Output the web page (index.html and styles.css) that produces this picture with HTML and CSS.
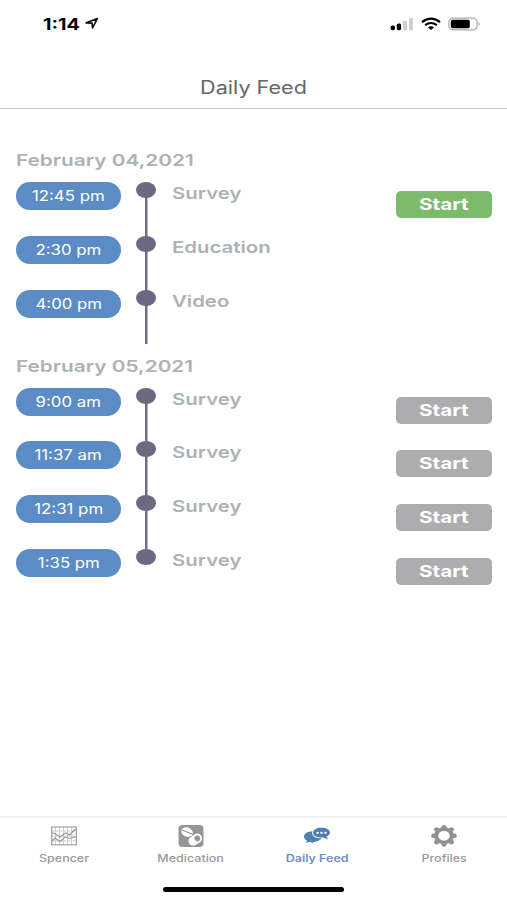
FILE: index.html
```html
<!DOCTYPE html>
<html lang="en">
<head>
<meta charset="utf-8">
<title>Daily Feed</title>
<link rel="stylesheet" href="styles.css">
</head>
<body>
<div class="app">
  <div class="status">
    <span class="clock"><span class="wide">1:14</span></span>
    <svg class="location" width="14" height="13" viewBox="0 0 14 13"><path d="M1.2 5.8 12.3 1.600 7.6 10.800 7 6.1Z" fill="none" stroke="#111" stroke-width="1.7" stroke-linejoin="round"/></svg>
    <svg class="signals" width="92" height="14" viewBox="0 0 92 14">
      <rect x="0.7" y="8.4" width="4.3" height="4.8" rx="1.6"/><rect x="6.8" y="6.4" width="4.3" height="6.8" rx="1.6"/>
      <g fill="#d0d0d0"><rect x="13" y="3.8" width="4.1" height="9.4" rx="1"/><rect x="19" y="1" width="4.1" height="12.2" rx="1"/></g>
      <g fill="none" stroke="#000" stroke-width="2.1"><path d="M32 5.1q9-7 18 0"/><path d="M35.2 8.2q5.8-4.4 11.6 0"/></g>
      <path d="M38 10.4q3-2.1 6 0L41 13Z"/>
      <rect x="58.9" y="1.2" width="28.2" height="11.6" rx="4" fill="#fff" stroke="#aaa" stroke-width="1.2"/><rect x="60.8" y="2.8" width="19" height="8.4" rx="1.8"/><path d="M88.5 4.8q2.5 2.2 0 4.4Z" fill="#aaa"/>
    </svg>
  </div>
  <header class="title"><span class="wide">Daily Feed</span></header>
  <main class="feed">
    <section class="day">
      <h2><span class="wide">February 04,2021</span></h2>
      <div class="event"><div class="time"><span class="wide">12:45 pm</span></div><div class="track"><i></i></div><div class="kind"><span class="wide">Survey</span></div><button class="start active"><span class="wide">Start</span></button></div>
      <div class="event"><div class="time"><span class="wide">2:30 pm</span></div><div class="track"><i></i></div><div class="kind"><span class="wide">Education</span></div></div>
      <div class="event"><div class="time"><span class="wide">4:00 pm</span></div><div class="track"><i></i></div><div class="kind"><span class="wide">Video</span></div></div>
    </section>
    <section class="day last">
      <h2><span class="wide">February 05,2021</span></h2>
      <div class="event"><div class="time"><span class="wide">9:00 am</span></div><div class="track"><i></i></div><div class="kind"><span class="wide">Survey</span></div><button class="start"><span class="wide">Start</span></button></div>
      <div class="event"><div class="time"><span class="wide">11:37 am</span></div><div class="track"><i></i></div><div class="kind"><span class="wide">Survey</span></div><button class="start"><span class="wide">Start</span></button></div>
      <div class="event"><div class="time"><span class="wide">12:31 pm</span></div><div class="track"><i></i></div><div class="kind"><span class="wide">Survey</span></div><button class="start"><span class="wide">Start</span></button></div>
      <div class="event"><div class="time"><span class="wide">1:35 pm</span></div><div class="track"><i></i></div><div class="kind"><span class="wide">Survey</span></div><button class="start"><span class="wide">Start</span></button></div>
    </section>
  </main>
  <nav class="tabs">
    <a class="tab"><svg width="28" height="24" viewBox="0 0 28 24"><g fill="none" stroke="#c4c4c4" stroke-width="0.8"><path d="M5.5 3v18M9.5 3v18M13.5 3v18M17.5 3v18M21.5 3v18M2 7h24M2 12h24M2 17h24"/></g><g fill="none" stroke="#999" stroke-width="1.1"><rect x="1.7" y="3" width="24.6" height="17.8"/><path d="M2 9l3 .5 5 3.5 5.500-4 4 2 6-6M2 17l3-3 5 3.500 5-4.500 5 1.500 6-2"/></g></svg><span class="wide">Spencer</span></a>
    <a class="tab"><svg width="28" height="24" viewBox="0 0 28 24"><rect x="1.500" y="1" width="25" height="22" rx="4" fill="#969696"/><g transform="rotate(22 10 8)"><ellipse cx="10" cy="8" rx="6" ry="4.600" fill="#fff"/><path d="M4 8h12" stroke="#969696" stroke-width="1.200"/></g><g transform="rotate(-32 18.500 15.500)"><rect x="11" y="10.800" width="14.500" height="9.400" rx="4.700" fill="#fff"/><path d="M18 15.500c0-2 .5-3 2.500-3a3 3 0 0 1 0 6c-2 0-2.500-1-2.500-3Z" fill="#969696"/></g></svg><span class="wide">Medication</span></a>
    <a class="tab current"><svg width="28" height="24" viewBox="0 0 28 24"><path d="M9.300 7.200C4.500 7.400 1 9.500 1 12.500c0 1.900 1.200 3.200 3 4.200L3 19l4-1.200 1.200.2L9 19.500l1.500-1.600c4.500-.3 7.500-2 8-3.600C12 14.500 8 11.500 9.300 7.200Z" fill="#4f7db4"/><path d="M18.500 3.800c-5 0-8.500 2-8.500 5s3.500 4.800 8.500 4.800h1.800l4.700 1.900-1.500-3c2-.9 3.500-2.100 3.500-3.700 0-3-3.500-5-8.500-5Z" fill="#4f7db4"/><g fill="#fff"><ellipse cx="14.600" cy="8.800" rx="1.300" ry="1.100"/><ellipse cx="18.500" cy="8.800" rx="1.300" ry="1.100"/><ellipse cx="22.400" cy="8.800" rx="1.300" ry="1.100"/></g></svg><span class="wide">Daily Feed</span></a>
    <a class="tab"><svg width="28" height="24" viewBox="0 0 28 24"><g transform="translate(14 11.800) scale(1.180 1)"><circle r="6.700" fill="none" stroke="#919191" stroke-width="3.600"/><g stroke="#919191" stroke-width="4.400" stroke-linecap="round"><path d="M0-8.200v-.5M0 8.200v.5M-8.200 0h-.5M8.200 0h.5M-6-6l-.3-.3M6 6l.3.3M6-6l.3-.3M-6 6l-.3.3"/></g></g></svg><span class="wide">Profiles</span></a>
  </nav>
  <div class="home"></div>
</div>
</body>
</html>
```
FILE: styles.css
```css
* { box-sizing: border-box; }
body { margin: 0; background: #fff; font-family: Inter, "Liberation Sans", sans-serif; }
.app { width: 507px; height: 900px; display: flex; flex-direction: column; overflow: hidden; }
/* Expanded lettering across the interface */
.wide { display: inline-block; white-space: nowrap; transform: scaleX(var(--stretch, 1.2)); }
.status { height: 48px; display: flex; align-items: center; padding: 0 25px 0 43px; }
.clock { width: 42px; font-size: 16px; font-weight: 700; line-height: 20px; --stretch: 1.23; }
.clock .wide, h2 .wide, .kind .wide { transform-origin: left center; }
.location { margin-top: -1px; }
.signals { margin-left: auto; }
.title { height: 61px; border-bottom: 1.500px solid #c9c9c9; padding-top: 28px; text-align: center; color: #666; font-size: 18px; line-height: 24px; --stretch: 1.2; }
.feed { flex: 1; padding: 41px 15px 0 16px; }
.day { height: 205.500px; }
h2 { margin: 0 0 12px; height: 20px; font-size: 16.500px; line-height: 20px; font-weight: 600; color: #adb2b5; --stretch: 1.26; }
.event { height: 53.850px; display: grid; grid-template-columns: 105px 50px 225px 96px; align-items: start; }
.time { height: 28px; border-radius: 14px; background: #5b8cc6; color: #fff; text-align: center; font-size: 14px; line-height: 28px; --stretch: 1.2; }
.track { height: 100%; display: flex; justify-content: center; background: linear-gradient(#706e89, #706e89) 24px 0 / 2.500px 100% no-repeat; }
.track i { width: 20px; height: 16px; border-radius: 50%; background: #6c6a83; }
.last .event:last-child .track { background: none; }
.kind { padding-left: 1px; font-size: 16.500px; line-height: 22px; font-weight: 600; color: #adb2b5; --stretch: 1.235; }
.start { margin-top: 9px; width: 96px; height: 27px; padding: 0 0 1px; border: 0; border-radius: 5px; background: #adadaf; color: #fff; font: 700 16.500px/26px Inter, sans-serif; --stretch: 1.25; }
.start.active { background: #7dbb6c; }
.tabs { height: 62px; border-top: 2px solid #f1f1f1; display: grid; grid-template-columns: repeat(4, 1fr); }
.tab { display: flex; flex-direction: column; align-items: center; padding-top: 6px; padding-left: 1px; color: #999; font-size: 10px; font-weight: 500; line-height: 14px; --stretch: 1.25; }
.tab svg { margin-bottom: 3px; }
.tab.current { color: #6d8fc0; font-weight: 600; }
.home { width: 181px; height: 5px; margin: 9px auto 8px; border-radius: 3px; background: #000; }
```
